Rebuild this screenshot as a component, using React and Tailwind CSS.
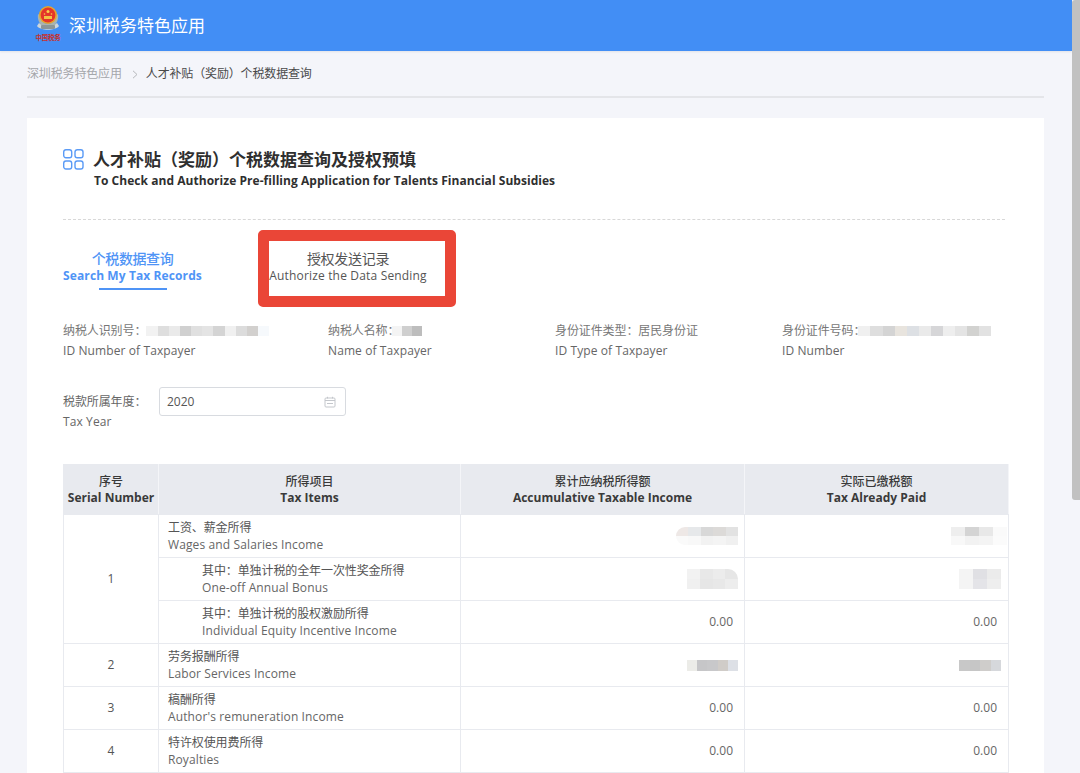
const font = "font-['Open_Sans','Noto_Sans_CJK_SC',sans-serif]";

const info = [
  { w: 'w-[265px]', cn: '纳税人识别号：', en: 'ID Number of Taxpayer', value: <Mosaic rows={[['bg-[#f2f2f2]', 'bg-[#dedede]', 'bg-[#eaeaea]', 'bg-[#d0d0d0]', 'bg-[#e0e0e0]', 'bg-[#e4e4e4]', 'bg-[#d4d4d4]', 'bg-[#f0f0f0]', 'bg-[#dcdcdc]', 'bg-[#d2d0ce]', 'bg-[#f6f9fc]']]} cell="w-[11.2px] h-[10px]" /> },
  { w: 'w-[227px]', cn: '纳税人名称：', en: 'Name of Taxpayer', value: <Mosaic className="ml-[-7px]" rows={[['bg-[#f4f4f4]', 'bg-[#cfcfcf]', 'bg-[#bdbdbd]']]} cell="w-[10px] h-[10px]" /> },
  { w: 'w-[227px]', cn: '身份证件类型：居民身份证', en: 'ID Type of Taxpayer' },
  { w: 'flex-1', cn: '身份证件号码：', en: 'ID Number', value: <Mosaic className="ml-[-7px]" rows={[['bg-[#f0f0f0]', 'bg-[#dedede]', 'bg-[#d4d4d4]', 'bg-[#e8e4de]', 'bg-[#dde0e4]', 'bg-[#eaeaea]', 'bg-[#d6d6d8]', 'bg-[#eeeeee]', 'bg-[#e4e4e4]', 'bg-[#d2d2d0]', 'bg-[#e2e2e2]']]} cell="w-[12.1px] h-[10px]" /> },
];

const rows = [
  { cn: '工资、薪金所得', en: 'Wages and Salaries Income', serial: '1', span: 3,
    income: <Mosaic className="mr-[-5px] rounded-l-full overflow-hidden" rows={[['bg-[#eee8e6]', 'bg-[#e6e8ea]', 'bg-[#d8d8d8]', 'bg-[#dcdad8]', 'bg-[#e2e2e2]'], ['bg-[#fafafa]', 'bg-[#f8f8f8]', 'bg-[#f2f2f2]', 'bg-[#f4f4f4]', 'bg-[#f0f0f0]']]} cell="w-[12.4px] h-[9px]" />,
    tax: <Mosaic className="mr-[-10px]" rows={[['bg-[#eeeeee]', 'bg-[#d4d4d4]', 'bg-[#e8e8e8]', 'bg-[#fafafa]'], ['bg-[#f8f8f8]', 'bg-[#f2f2f2]', 'bg-[#f4f4f4]', 'bg-[#fbfbfb]']]} cell="w-[14px] h-[9px]" /> },
  { cn: '其中：单独计税的全年一次性奖金所得', en: 'One-off Annual Bonus', indent: true,
    income: <Mosaic className="mr-[-5px] rounded-tr-[10px] overflow-hidden" rows={[['bg-[#f2f2f2]', 'bg-[#e8e8e8]', 'bg-[#ececec]', 'bg-[#e6e6e6]'], ['bg-[#f0f0f0]', 'bg-[#e6e6e6]', 'bg-[#e8e8e8]', 'bg-[#ededed]']]} cell="w-[12.75px] h-[10px]" />,
    tax: <Mosaic className="mr-[-4px]" rows={[['bg-[#f4f4f4]', 'bg-[#e0e0e4]', 'bg-[#ebebeb]'], ['bg-[#f4f4f4]', 'bg-[#e4e4e8]', 'bg-[#eeeeee]']]} cell="w-[14px] h-[10px]" /> },
  { cn: '其中：单独计税的股权激励所得', en: 'Individual Equity Incentive Income', indent: true, income: '0.00', tax: '0.00' },
  { cn: '劳务报酬所得', en: 'Labor Services Income', serial: '2',
    income: <Mosaic className="mr-[-5px]" rows={[['bg-[#ecece8]', 'bg-[#c6c6c8]', 'bg-[#c8c8ca]', 'bg-[#d0ccc8]', 'bg-[#dde0e6]']]} cell="w-[10.2px] h-[11px]" />,
    tax: <Mosaic className="mr-[-4px]" rows={[['bg-[#c8c8c8]', 'bg-[#c6c6c6]', 'bg-[#cfcdcb]', 'bg-[#d6d8dc]']]} cell="w-[10.5px] h-[11px]" /> },
  { cn: '稿酬所得', en: "Author's remuneration Income", serial: '3', income: '0.00', tax: '0.00' },
  { cn: '特许权使用费所得', en: 'Royalties', serial: '4', income: '0.00', tax: '0.00' },
];

function Mosaic({ rows, cell, className = '' }) {
  return (
    <span className={`inline-flex flex-col align-middle blur-[0.6px] ${className}`}>
      {rows.map((r, i) => (
        <span key={i} className="flex">
          {r.map((c, j) => <span key={j} className={`${cell} ${c}`} />)}
        </span>
      ))}
    </span>
  );
}

function Logo() {
  return (
    <div className="w-[26px] flex flex-col items-center mt-[-6px]">
      <svg width="26" height="29" viewBox="0 0 26 29">
        <path d="M2 22 C6 27 20 27 24 22 L22 19 C18 23 8 23 4 19 Z" fill="#cfd6da" />
        <path d="M3 10 C2 16 5 21 9 23 L13 21 L17 23 C21 21 24 16 23 10 L20 12 C20 17 17 20 13 20 C9 20 6 17 6 12 Z" fill="#a9b4b0" />
        <rect x="6" y="21" width="14" height="4" rx="1" fill="#8b9698" />
        <circle cx="13" cy="11" r="9" fill="#e8a52c" />
        <circle cx="13" cy="11" r="7.4" fill="#e4352a" />
        <circle cx="13" cy="7.5" r="1.5" fill="#f6d04a" />
        <circle cx="9.5" cy="10" r="0.8" fill="#f6d04a" />
        <circle cx="16.5" cy="10" r="0.8" fill="#f6d04a" />
        <rect x="9" y="12" width="8" height="3" fill="#f3c244" />
      </svg>
      <span className="text-[6.5px] leading-[9px] text-[#c9302a] font-bold whitespace-nowrap tracking-[-0.2px]">中国税务</span>
    </div>
  );
}

function Cell({ children, className = '', ...rest }) {
  return <td {...rest} className={`border border-[#e8eaef] ${className}`}>{children}</td>;
}

export default function App() {
  return (
    <div className={`${font} h-[773px] overflow-hidden flex bg-[#f4f5fa] text-xs text-[#555]`}>
      <div className="flex-1 min-w-0">
        <header className="h-[51px] bg-[#428ef5] flex items-center pl-[35px] shadow-[0_1px_2px_rgba(0,0,0,0.08)]">
          <Logo />
          <span className="ml-2 mt-[1px] text-[17px] text-white">深圳税务特色应用</span>
        </header>

        <div className="ml-[27px] mr-[28px]">
          <div className="h-[47px] border-b-2 border-[#e4e5e9] flex items-center pt-[1px] tracking-[-0.15px]">
            <span className="text-[#a5a7ab]">深圳税务特色应用</span>
            <svg className="ml-[10px] mr-[8px]" width="6" height="9" viewBox="0 0 6 9" fill="none">
              <path d="M1 0.8 L5 4.5 L1 8.2" stroke="#b5b7bb" strokeWidth="1" />
            </svg>
            <span className="text-[#4a4a4a]">人才补贴（奖励）个税数据查询</span>
          </div>

          <main className="mt-[20px] bg-white px-9 h-[700px]">
            <div className="pt-[32px] flex">
              <svg className="mt-[-1px]" width="21" height="21" viewBox="0 0 21 21" fill="none" stroke="#5b9bf6" strokeWidth="1.4">
                <rect x="0.7" y="0.7" width="8" height="8" rx="2.2" />
                <rect x="12" y="0.7" width="8" height="8" rx="2.2" />
                <rect x="0.7" y="12" width="8" height="8" rx="2.2" />
                <rect x="12" y="12" width="8" height="8" rx="2.2" />
              </svg>
              <div className="ml-[10px]">
                <h1 className="text-[17px] leading-[20px] font-bold text-[#2f2f2f] ml-[-1px]">人才补贴（奖励）个税数据查询及授权预填</h1>
                <p className="text-xs leading-[22px] font-bold text-[#2f2f2f] tracking-[0.04px]">To Check and Authorize Pre-filling Application for Talents Financial Subsidies</p>
              </div>
            </div>

            <div className="mt-[27px] w-[942px] border-t border-dashed border-[#d8d8d8]" />

            <div className="flex mt-[29px] h-[60px]">
              <div className="w-[139px] flex flex-col items-center">
                <span className="text-sm leading-[20px] text-[#4f94f6] font-medium tracking-[-0.4px]">个税数据查询</span>
                <span className="text-xs leading-[14px] font-bold text-[#4f94f6] whitespace-nowrap tracking-[0.1px]">Search My Tax Records</span>
                <span className="mt-[5px] w-[68px] h-[2px] bg-[#4f94f6]" />
              </div>
              <div className="relative ml-[67px] w-[158px] flex flex-col items-center">
                <span className="text-sm leading-[20px] text-[#555] tracking-[-0.3px]">授权发送记录</span>
                <span className="text-xs leading-[14px] whitespace-nowrap text-[#555] tracking-[0.17px]">Authorize the Data Sending</span>
                <div className="absolute left-[-11px] top-[-19px] w-[198px] h-[77px] border-[11px] border-[#ea4637] rounded-[5px]" />
              </div>
            </div>

            <div className="flex mt-[12px]">
              {info.map((it) => (
                <div key={it.en} className={it.w}>
                  <div className="h-[20px] flex items-center text-[#777] whitespace-nowrap tracking-[-0.1px]">
                    <span>{it.cn}</span>
                    {it.value}
                  </div>
                  <div className="h-[20px] flex items-center text-[#666] tracking-[0.1px]">{it.en}</div>
                </div>
              ))}
            </div>

            <div className="mt-[26px] flex items-center">
              <span className="w-[96px] text-[#666] tracking-[-0.1px]">税款所属年度：</span>
              <div className="w-[187px] h-[29px] border border-[#d8dbe0] rounded-[3px] flex items-center justify-between pl-[7px] pr-[9px] text-[#555]">
                2020
                <svg width="12" height="12" viewBox="0 0 12 12" fill="none" stroke="#c4c7cc" strokeWidth="1">
                  <rect x="1" y="2" width="10" height="9" rx="1" />
                  <path d="M1 4.5 H11 M3.5 0.8 V2.5 M8.5 0.8 V2.5 M3 7.5 H9" />
                </svg>
              </div>
            </div>
            <div className="mt-[-4px] leading-[20px] text-[#666] tracking-[0.1px]">Tax Year</div>

            <table className="mt-[32px] w-[945px] table-fixed border-collapse">
              <colgroup>
                <col className="w-[95px]" />
                <col className="w-[302px]" />
                <col className="w-[284px]" />
                <col className="w-[264px]" />
              </colgroup>
              <thead>
                <tr className="h-[50px] bg-[#e8eaef] text-[#3a3a3a] text-center">
                  {[
                    ['序号', 'Serial Number'],
                    ['所得项目', 'Tax Items'],
                    ['累计应纳税所得额', 'Accumulative Taxable Income'],
                    ['实际已缴税额', 'Tax Already Paid'],
                  ].map(([cn, en]) => (
                    <th key={en} className="border border-[#e8eaef] border-r-[#f4f5f8] font-bold leading-[16px]">
                      <div className="font-medium">{cn}</div>
                      <div className="whitespace-nowrap">{en}</div>
                    </th>
                  ))}
                </tr>
              </thead>
              <tbody>
                {rows.map((r) => (
                  <tr key={r.en} className="h-[43px]">
                    {r.serial && <Cell className="text-center text-[#555]" rowSpan={r.span || 1}>{r.serial}</Cell>}
                    <Cell className={`leading-[17px] ${r.indent ? 'pl-[43px]' : 'pl-[9px]'}`}>
                      <div className="text-[#555] tracking-[-0.1px]">{r.cn}</div>
                      <div className="text-[#666] tracking-[0.12px]">{r.en}</div>
                    </Cell>
                    <Cell className="text-right pr-[11px] text-[#666]">{r.income}</Cell>
                    <Cell className="text-right pr-[11px] text-[#666]">{r.tax}</Cell>
                  </tr>
                ))}
              </tbody>
            </table>
          </main>
        </div>
      </div>

      <div className="w-2 shrink-0 bg-[#f4f5fa]">
        <div className="h-[500px] bg-[#c1c1c1] rounded-l-[3px]" />
      </div>
    </div>
  );
}
